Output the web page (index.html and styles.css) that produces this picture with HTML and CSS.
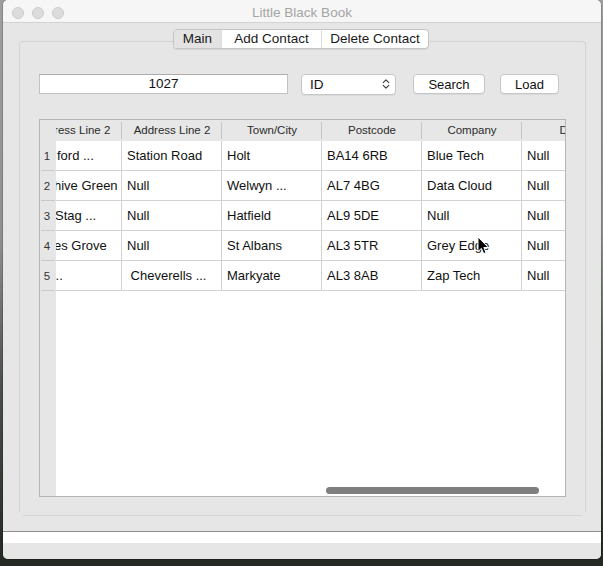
FILE: index.html
```html
<!DOCTYPE html>
<html>
<head>
<meta charset="utf-8">
<title>Little Black Book</title>
<link rel="stylesheet" href="styles.css">
</head>
<body>
<div class="window">
  <div class="titlebar">
    <div class="lights"><span class="light"></span><span class="light"></span><span class="light"></span></div>
    <div class="title">Little Black Book</div>
    <div></div>
  </div>
  <div class="main">
    <div class="tabs">
      <div class="tab tab-main active">Main</div>
      <div class="tab tab-add">Add Contact</div>
      <div class="tab tab-del">Delete Contact</div>
    </div>
    <div class="pane">
      <div class="controls">
        <div class="lineedit">1027</div>
        <div class="combo"><span>ID</span>
          <svg class="chev" width="8" height="12" viewBox="0 0 8 12"><path d="M1.2 4.6 L4 1.8 L6.8 4.6 M1.2 7.4 L4 10.2 L6.8 7.4" fill="none" stroke="#3a3a3a" stroke-width="1.1" stroke-linecap="round" stroke-linejoin="round"/></svg>
        </div>
        <div class="btn btn-search">Search</div>
        <div class="btn btn-load">Load</div>
      </div>
      <div class="table">
        <div class="vhead">
          <div class="corner"></div>
          <div class="rn">1</div>
          <div class="rn">2</div>
          <div class="rn">3</div>
          <div class="rn">4</div>
          <div class="rn">5</div>
        </div>
        <div class="grid">
          <div class="hrow">
            <div class="hc first"><span>Address Line 2</span></div>
            <div class="hc">Address Line 2</div>
            <div class="hc">Town/City</div>
            <div class="hc">Postcode</div>
            <div class="hc">Company</div>
            <div class="hc">DOB</div>
          </div>
          <div class="row">
            <div class="cell c0"><span class="o1">ford ...</span></div>
            <div class="cell">Station Road</div>
            <div class="cell">Holt</div>
            <div class="cell">BA14 6RB</div>
            <div class="cell">Blue Tech</div>
            <div class="cell">Null</div>
          </div>
          <div class="row">
            <div class="cell c0"><span class="om2">hive Green</span></div>
            <div class="cell">Null</div>
            <div class="cell">Welwyn ...</div>
            <div class="cell">AL7 4BG</div>
            <div class="cell">Data Cloud</div>
            <div class="cell">Null</div>
          </div>
          <div class="row">
            <div class="cell c0"><span class="om1">Stag ...</span></div>
            <div class="cell">Null</div>
            <div class="cell">Hatfield</div>
            <div class="cell">AL9 5DE</div>
            <div class="cell">Null</div>
            <div class="cell">Null</div>
          </div>
          <div class="row">
            <div class="cell c0"><span class="om2">es Grove</span></div>
            <div class="cell">Null</div>
            <div class="cell">St Albans</div>
            <div class="cell">AL3 5TR</div>
            <div class="cell">Grey Edge</div>
            <div class="cell">Null</div>
          </div>
          <div class="row">
            <div class="cell c0"><span class="om4">...</span></div>
            <div class="cell">&nbsp;Cheverells ...</div>
            <div class="cell">Markyate</div>
            <div class="cell">AL3 8AB</div>
            <div class="cell">Zap Tech</div>
            <div class="cell">Null</div>
          </div>
          <div class="hscroll"></div>
        </div>
      </div>
    </div>
    <div class="pane-bottom"></div>
  </div>
  <div class="status"></div>
</div>
<svg class="cursor" width="13" height="19" viewBox="0 0 13 19"><path d="M1 1 L1 15.5 L4.4 12.4 L6.7 17.6 L9 16.6 L6.8 11.5 L11.3 11.5 Z" fill="#000" stroke="#fff" stroke-width="1" stroke-linejoin="round"/></svg>
</body>
</html>
```
FILE: styles.css
```css
* { box-sizing: border-box; }
html, body { margin: 0; }
body {
  width: 603px;
  height: 566px;
  overflow: hidden;
  padding: 0 2px 0 3px;
  position: relative;
  font-family: "Liberation Sans", Arial, sans-serif;
  background: linear-gradient(180deg, #9e9e9e 0%, #8e908e 42%, #4b504b 68%, #232823 100%);
}
.window {
  width: 598px;
  height: 559px;
  background: #e6e6e6;
  border-radius: 5px;
  display: flex;
  flex-direction: column;
  overflow: hidden;
  box-shadow: 0 0 0 0.5px rgba(0,0,0,0.3);
}
.titlebar {
  height: 23px;
  flex: none;
  display: grid;
  grid-template-columns: 1fr auto 1fr;
  background: #f6f6f6;
  border-bottom: 1px solid #d3d3d3;
}
.lights { display: flex; gap: 8px; padding: 7px 0 0 9px; }
.light {
  width: 12px; height: 12px; border-radius: 50%;
  background: #dcdcdc; border: 1px solid #cdcdcd;
}
.title { font-size: 13.5px; color: #a4a4a4; line-height: 17px; padding-top: 3.5px; }
.main { padding: 6px 15px 0 16px; }
.tabs {
  display: flex;
  width: 256px;
  height: 20px;
  margin: 0 0 -8px 154px;
  border: 1px solid #c4c4c4;
  border-radius: 4px;
  background: #fff;
  box-shadow: 0 1px 1px rgba(0,0,0,0.08);
  position: relative;
  z-index: 1;
  overflow: hidden;
}
.tab { font-size: 13.5px; color: #1a1a1a; line-height: 18px; text-align: center; }
.tab-main { width: 47px; }
.tab-add { width: 100px; }
.tab-del { width: 107px; }
.tab.active { background: #e3e3e3; }
.tab + .tab { border-left: 1px solid #dedede; }
.pane {
  height: 471px;
  border: 1px solid #d4d4d4;
  border-bottom: none;
  border-radius: 4px 4px 0 0;
  padding: 31px 19px 0 19px;
}
.controls { display: flex; align-items: center; height: 22px; }
.lineedit {
  width: 249px; height: 20px;
  background: #fff;
  border: 1px solid #c2c2c2;
  border-top-color: #adadad;
  text-align: center;
  font-size: 13.5px;
  line-height: 18px;
  color: #111;
}
.combo {
  margin-left: 13px;
  width: 95px; height: 21px;
  background: #fff;
  border: 1px solid #c6c6c6;
  border-radius: 4px;
  box-shadow: 0 1px 0 rgba(0,0,0,0.05);
  display: flex; align-items: center; justify-content: space-between;
  padding: 0 5px 0 8px;
  font-size: 13.5px; color: #111;
}
.btn {
  height: 20px;
  background: #fff;
  border: 1px solid #c6c6c6;
  border-radius: 4px;
  box-shadow: 0 1px 0 rgba(0,0,0,0.05);
  display: flex; align-items: center; justify-content: center;
  font-size: 13px; color: #111;
}
.btn-search { margin-left: 17px; width: 72px; }
.btn-load { margin-left: 15px; width: 59px; }
.table {
  margin-top: 24px;
  height: 378px;
  border: 1px solid #b5b5b5;
  background: #fff;
  display: flex;
}
.vhead { width: 16px; flex: none; background: #e6e6e6; }
.corner { height: 21px; }
.rn {
  height: 30px;
  font-size: 11.5px; color: #333;
  display: flex; align-items: center; justify-content: center;
  padding-right: 2px;
  background: linear-gradient(#c9c9c9, #c9c9c9) no-repeat left 1px bottom 0 / 14px 1px;
}
.grid { flex: 1; overflow: hidden; position: relative; }
.hrow, .row {
  display: grid;
  grid-template-columns: 66px repeat(5, 100px);
  width: 566px;
}
.hrow { height: 21px; background: #e7e7e7; }
.hc {
  font-size: 11.5px; color: #2b2b2b;
  text-align: center; line-height: 21px;
  white-space: nowrap; overflow: hidden;
  background: linear-gradient(#c6c6c6, #c6c6c6) no-repeat right 0 top 2px / 1px 17px;
}
.hc.first span { display: block; width: 100px; margin-left: -34px; }
.row { height: 30px; border-bottom: 1px solid #d3d3d3; }
.cell {
  border-right: 1px solid #d3d3d3;
  font-size: 13px; color: #111;
  padding-left: 5px;
  line-height: 29px;
  white-space: nowrap; overflow: hidden;
}
.cell.c0 { padding-left: 0; }
.c0 span { display: inline-block; }
.o1 { margin-left: 1px; }
.om1 { margin-left: -1px; }
.om2 { margin-left: -2px; }
.om4 { margin-left: -4px; }
.hscroll {
  position: absolute;
  left: 270px; top: 367px;
  width: 213px; height: 7px;
  border-radius: 4px;
  background: #7f7f7f;
}
.pane-bottom { height: 1px; background: #d6d6d6; margin: 3px 4px 0; }
.status {
  margin-top: auto;
  height: 28px;
  border-top: 1px solid #8f8f8f;
  background: linear-gradient(#ffffff 0 11px, #e6e6e6 11px);
}
.cursor { position: absolute; left: 477px; top: 236px; }
```
